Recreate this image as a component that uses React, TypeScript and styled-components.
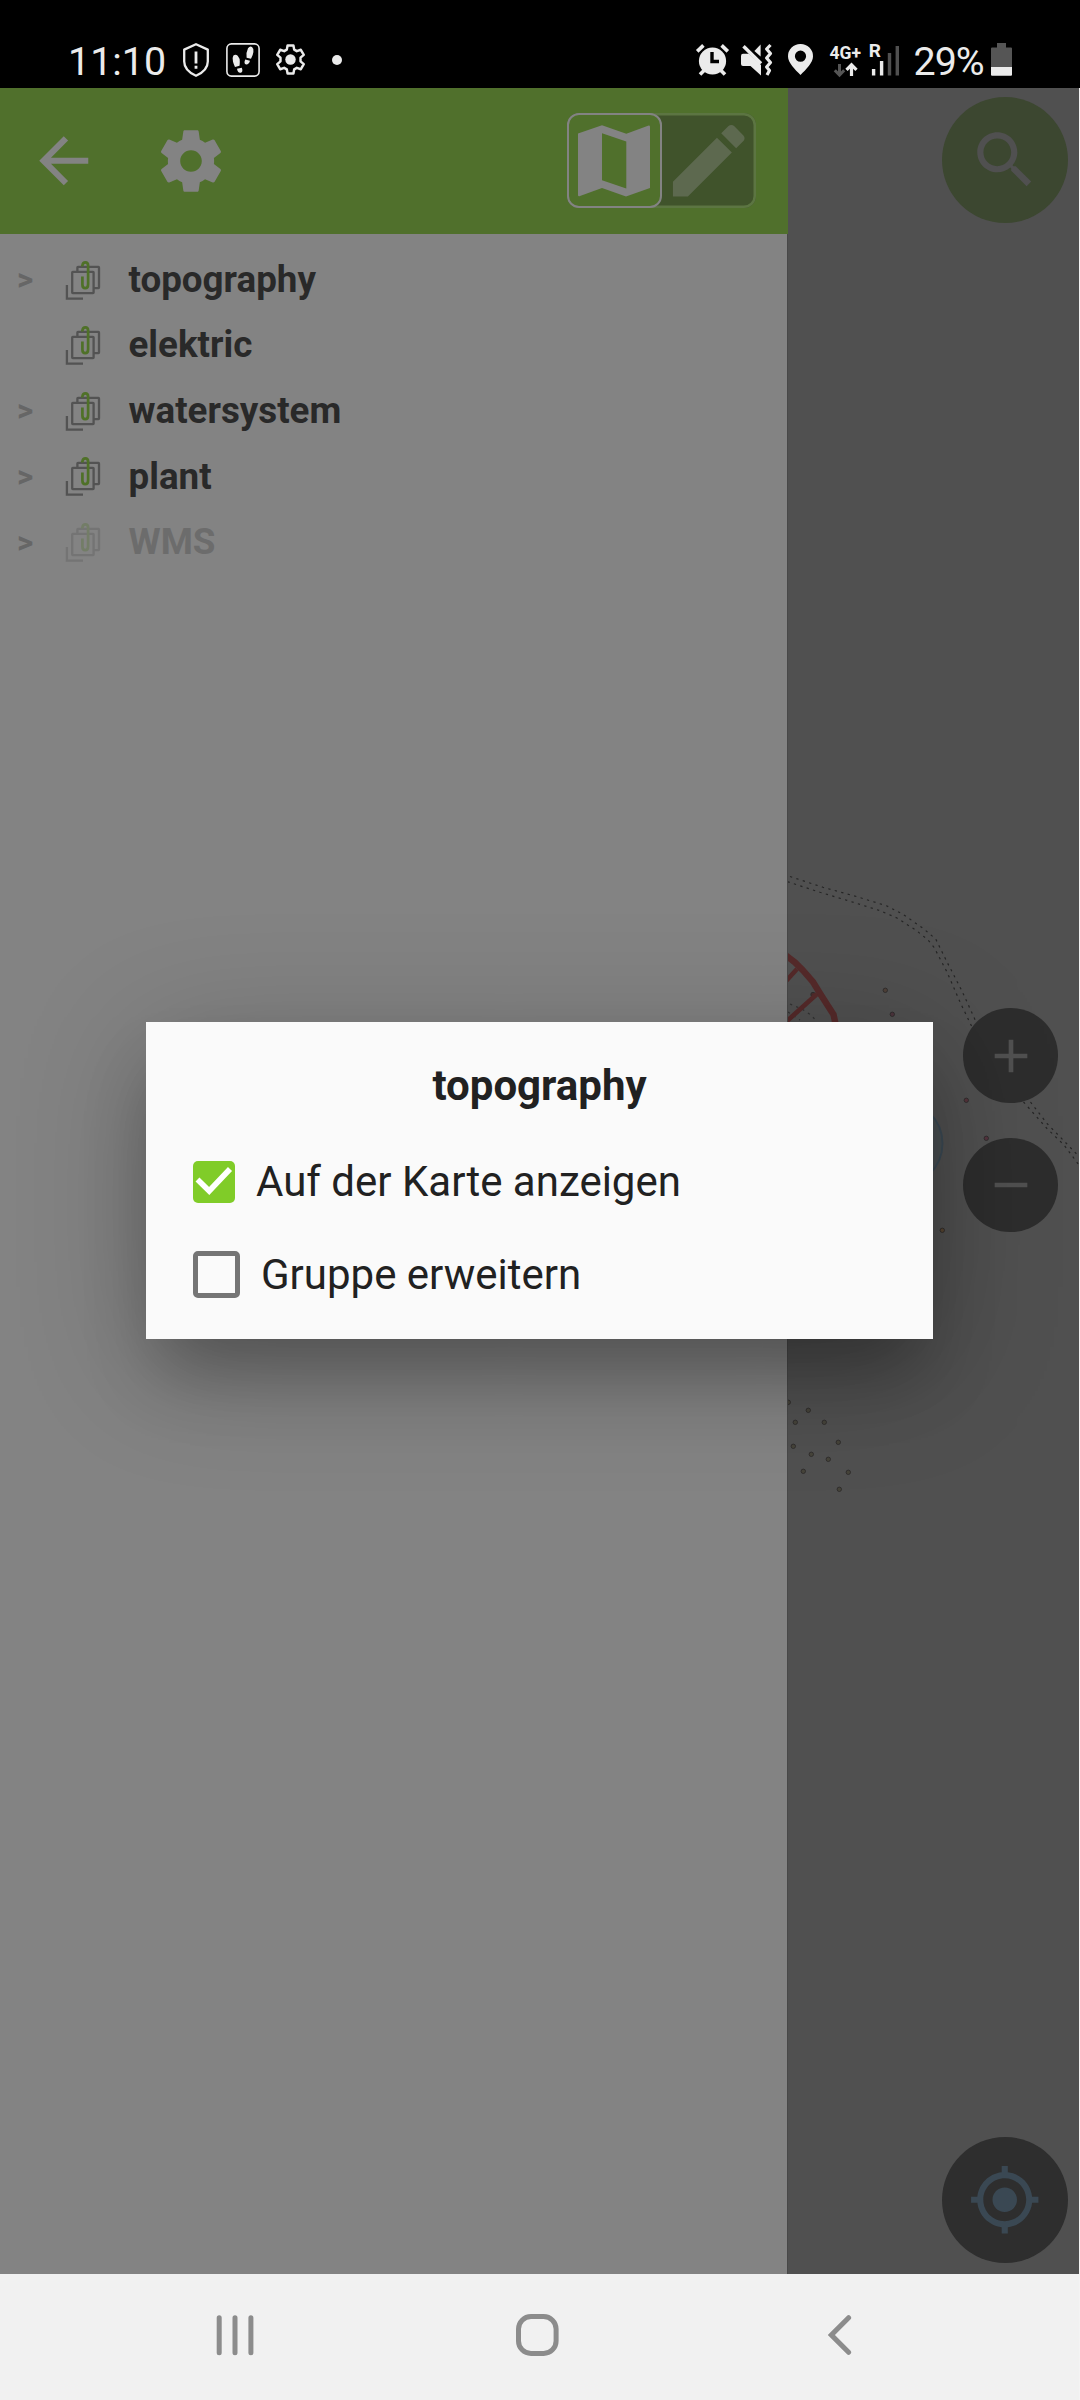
import React from "react";
import styled, { createGlobalStyle } from "styled-components";

const GlobalStyle = createGlobalStyle`
  *, *::before, *::after { box-sizing: border-box; }
  body { margin: 0; background: #f4f4f4; font-family: Roboto, "Noto Sans", sans-serif; }
  svg { display: block; flex: none; }
`;

const Screen = styled.div`
  width: 1080px;
  height: 2400px;
  display: flex;
  flex-direction: column;
  overflow: hidden;
`;

/* ---------- status bar ---------- */

const StatusBar = styled.header`
  height: 88px;
  flex: none;
  display: flex;
  justify-content: space-between;
  align-items: center;
  padding: 31px 68px 0 68px;
  background: #000;
  color: #ebebeb;
`;

const StatusGroup = styled.div`
  display: flex;
  align-items: center;
`;

const StatusText = styled.span<{ $width: number; $spacing?: number }>`
  width: ${(p) => p.$width}px;
  padding-top: 4px;
  font-size: 39.4px;
  line-height: 46px;
  letter-spacing: ${(p) => p.$spacing ?? 0}px;
  white-space: nowrap;
`;

const StatusIcon = styled.svg<{ $gap: number }>`
  margin-left: ${(p) => p.$gap}px;
  overflow: visible;
`;

/* ---------- main area ---------- */

const Main = styled.main`
  position: relative;
  width: 1079px;
  height: 2186px;
  flex: none;
  display: flex;
`;

const Drawer = styled.aside`
  width: 788px;
  flex: none;
  display: flex;
  flex-direction: column;
`;

const DrawerHeader = styled.div`
  height: 146px;
  flex: none;
  display: flex;
  align-items: center;
  padding: 0 32px 1px 26.5px;
  background: #50702c;
  color: #838383;
`;

const HeaderButton = styled.button<{ $gap?: number }>`
  border: 0;
  padding: 0;
  margin-left: ${(p) => p.$gap ?? 0}px;
  background: none;
  color: inherit;
`;

const ModeSwitch = styled.div`
  display: flex;
  width: 189px;
  height: 95px;
  margin-left: auto;
  border-radius: 12px;
  background: #40532b;
  box-shadow: inset 0 0 0 2.5px #5c7542;
`;

const ModeButton = styled.button<{ $active?: boolean }>`
  width: 94.5px;
  height: 95px;
  padding: 0;
  display: flex;
  align-items: center;
  justify-content: center;
  border: ${(p) => (p.$active ? "2.5px solid #838383" : "0")};
  border-radius: 12px;
  background: ${(p) => (p.$active ? "#50702c" : "transparent")};
  color: ${(p) => (p.$active ? "#838383" : "#5d694f")};
`;

const LayerList = styled.ul`
  flex: 1;
  margin: 0;
  padding: 12.3px 0 0;
  list-style: none;
  background: #838383;
  border-right: 1px solid #484848;
`;

const LayerRow = styled.li`
  height: 65.625px;
  display: flex;
  align-items: center;
`;

const Expander = styled.span`
  width: 66px;
  padding: 2px 0 0 17px;
  font-size: 31.5px;
  line-height: 36px;
  font-weight: 700;
  color: #666;
`;

const LayerIcon = styled.svg<{ $dim?: boolean }>`
  margin-top: 2px;
  overflow: visible;
  opacity: ${(p) => (p.$dim ? 0.3 : 1)};
`;

const LayerName = styled.span<{ $dim?: boolean }>`
  margin-left: 28.5px;
  padding-top: 1.4px;
  font-size: 36.75px;
  line-height: 44px;
  font-weight: 700;
  color: ${(p) => (p.$dim ? "#6c6c6c" : "#292929")};
`;

const MapPane = styled.section`
  position: relative;
  flex: 1;
  display: flex;
  flex-direction: column;
  align-items: flex-end;
  padding: 9.3px 10.8px 11px 0;
  background: #505050;
`;

const MapDrawing = styled.svg`
  position: absolute;
  inset: 0;
`;

const RoundButton = styled.button<{ $size: number; $bg: string; $fg: string }>`
  position: relative;
  width: ${(p) => p.$size}px;
  height: ${(p) => p.$size}px;
  flex: none;
  padding: 0;
  border: 0;
  border-radius: 50%;
  display: flex;
  align-items: center;
  justify-content: center;
  background: ${(p) => p.$bg};
  color: ${(p) => p.$fg};
`;

const ZoomGroup = styled.div`
  display: flex;
  flex-direction: column;
  gap: 34.8px;
  margin: 785.2px 10.3px auto 0;
`;

/* ---------- dialog ---------- */

const DialogLayer = styled.div`
  position: absolute;
  inset: 0;
  display: flex;
  align-items: center;
  justify-content: center;
  padding-bottom: 1px;
  overflow: hidden;
`;

const Dialog = styled.div`
  width: 787px;
  height: 317px;
  padding: 24px 47px 0;
  background: #fafafa;
  color: #212121;
  box-shadow: 0 22px 130px rgba(0, 0, 0, 0.22), 0 45px 65px -12px rgba(0, 0, 0, 0.25);
`;

const DialogTitle = styled.h2`
  margin: 0 0 9px;
  font-size: 42px;
  line-height: 80px;
  font-weight: 700;
  text-align: center;
`;

const Option = styled.label`
  height: 93px;
  display: flex;
  align-items: center;
  font-size: 42px;
  line-height: 50px;
`;

const CheckBox = styled.span<{ $checked?: boolean }>`
  width: ${(p) => (p.$checked ? 42 : 47)}px;
  height: ${(p) => (p.$checked ? 42 : 47)}px;
  margin-right: 21px;
  flex: none;
  border: ${(p) => (p.$checked ? "0" : "5px solid #757575")};
  border-radius: 5px;
  background: ${(p) => (p.$checked ? "#80cc28" : "transparent")};
`;

/* ---------- navigation bar ---------- */

const NavBar = styled.nav`
  flex: 1;
  width: 1079px;
  display: flex;
  align-items: center;
  padding: 0 0 4px 216px;
  background: #f1f1f1;
`;

const NavIcon = styled.svg<{ $gap?: number }>`
  margin-left: ${(p) => p.$gap ?? 0}px;
  fill: none;
  stroke: #8c8c8c;
  stroke-width: 5;
  stroke-linecap: round;
`;

/* ---------- icons ---------- */

const GEAR =
  "M19.43 12.98c.04-.32.07-.64.07-.98s-.03-.66-.07-.98l2.11-1.65c.19-.15.24-.42.12-.64l-2-3.46c-.12-.22-.39-.3-.61-.22l-2.49 1c-.52-.4-1.08-.73-1.69-.98l-.38-2.65C14.46 2.18 14.25 2 14 2h-4c-.25 0-.46.18-.49.42l-.38 2.65c-.61.25-1.17.59-1.69.98l-2.49-1c-.23-.09-.49 0-.61.22l-2 3.46c-.13.22-.07.49.12.64l2.11 1.65c-.04.32-.07.65-.07.98s.03.66.07.98l-2.11 1.65c-.19.15-.24.42-.12.64l2 3.46c.12.22.39.3.61.22l2.49-1c.52.4 1.08.73 1.69.98l.38 2.65c.03.24.24.42.49.42h4c.25 0 .46-.18.49-.42l.38-2.65c.61-.25 1.17-.59 1.69-.98l2.49 1c.23.09.49 0 .61-.22l2-3.46c.12-.22.07-.49-.12-.64l-2.11-1.65zM12 15.5c-1.93 0-3.5-1.57-3.5-3.5s1.57-3.5 3.5-3.5 3.5 1.57 3.5 3.5-1.57 3.5-3.5 3.5z";

const Glyph = ({ d, size }: { d: string; size: number }) => (
  <svg width={size} height={size} viewBox="0 0 24 24" fill="currentColor">
    <path d={d} />
  </svg>
);

const MapGlyph = () => (
  <svg width="72" height="72" viewBox="0 0 72 72" fill="currentColor">
    <path
      fillRule="evenodd"
      d="M0 8.5 24 0.3 48.3 8.7 70 .7 Q72 0 72 2V63L48 71.4 24 63 2 71Q0 71.7 0 70ZM24 8.2V55.3L48.3 63.5V16.5Z"
    />
  </svg>
);

const LayerGroupIcon = ({ dim }: { dim?: boolean }) => (
  <LayerIcon $dim={dim} width="34" height="39" viewBox="0 0 34 39" fill="none">
    <g stroke="#535353" strokeWidth="2.3">
      <rect x="11.4" y="5.8" width="21.6" height="21.4" rx="0.6" />
      <rect x="6.2" y="10.9" width="21.4" height="21.2" rx="0.6" fill="#838383" />
      <path d="M0.9 24V37.7H17" />
    </g>
    <path
      d="M16.4 5.6V4.4Q16.8 1.3 19.4 1.3 22.1 1.3 22.1 4.6V23.2Q22.1 27.2 19.2 27.2 16.4 27.2 16.4 23.6V15.6"
      stroke="#4f7128"
      strokeWidth="2.7"
    />
  </LayerIcon>
);

const MapDot = ({ x, y, fill }: { x: number; y: number; fill: string }) => (
  <circle cx={x} cy={y} r="2.2" fill={fill} stroke="#2e2b2b" strokeWidth="0.9" />
);

const layers = [
  { name: "topography", expandable: true },
  { name: "elektric", expandable: false },
  { name: "watersystem", expandable: true },
  { name: "plant", expandable: true },
  { name: "WMS", expandable: true, dim: true },
];

const treeDots = [
  [788.3, 1402.3], [808.3, 1410.3], [795.3, 1422.3], [824.3, 1422.3], [838.3, 1442.3], [793.3, 1446.3],
  [811.3, 1454.3], [828.3, 1459.3], [803.3, 1471.3], [848.3, 1472.3], [839.3, 1489.3],
];

export default function App() {
  return (
    <Screen>
      <GlobalStyle />
      <StatusBar>
        <StatusGroup>
          <StatusText $width={99}>11:10</StatusText>
          <StatusIcon $gap={16} width="26" height="34" viewBox="0 0 26 34" fill="none" stroke="#ebebeb">
            <path d="M13 1.2 24.8 6.6V18.5Q24.8 27.5 13 32.8 1.2 27.5 1.2 18.5V6.6Z" strokeWidth="2.3" strokeLinejoin="round" />
            <path d="M13 8.5V20.5M13 22.8V25.8" strokeWidth="2.8" />
          </StatusIcon>
          <StatusIcon $gap={17} width="34" height="34" viewBox="0 0 34 34" fill="#ebebeb">
            <rect x="0.9" y="0.9" width="32.2" height="32.2" rx="4.5" fill="none" stroke="#ebebeb" strokeWidth="1.6" />
            <path d="M7.4 12.6Q9.5 11 11.7 12.8 14 15.5 13.8 18.6 13.8 21 13.5 22.8L9 24Q7.7 21.5 7 18.8 6 14.8 7.4 12.6ZM11 25.8 15.8 24.8Q17.3 28.6 15 29.7 11.8 30.6 11 25.8Z" />
            <path d="M22 5.2Q24 2.6 26 4 28 5.6 27.4 9 27 12.3 25 15.8L20.6 14.8Q20 9 22 5.2ZM19.2 16.4 24 17.8Q22.8 21.8 20.2 21.6 17.4 20.8 19.2 16.4Z" />
          </StatusIcon>
          <StatusIcon $gap={11.5} width="37" height="37" viewBox="0 0 24 24" fill="none" stroke="#ebebeb">
            <path
              d="M10.1 2.9h3.8l.5 2.7 1.7 1 2.6-.9 1.9 3.3-2.1 1.8v2.4l2.1 1.8-1.9 3.3-2.6-.9-1.7 1-.5 2.7h-3.8l-.5-2.7-1.7-1-2.6.9-1.9-3.3 2.1-1.8v-2.4L3.4 9l1.9-3.3 2.6.9 1.7-1z"
              strokeWidth="1.6"
              strokeLinejoin="round"
            />
            <circle cx="12" cy="12" r="3.4" fill="#ebebeb" stroke="none" />
          </StatusIcon>
          <StatusIcon $gap={23} width="10" height="10" viewBox="0 0 10 10" fill="#ebebeb">
            <circle cx="5" cy="5" r="5" />
          </StatusIcon>
        </StatusGroup>
        <StatusGroup>
          <StatusIcon $gap={0} width="33" height="32" viewBox="0 0 33 32" fill="none" stroke="#ebebeb">
            <circle cx="16.5" cy="17" r="13.6" fill="#ebebeb" stroke="none" />
            <path d="M1.2 7.4 7.4 1.4M31.8 7.4 25.6 1.4" strokeWidth="3.6" />
            <path d="M4 30.5 9 25.5M29 30.5 24 25.5" strokeWidth="3.6" />
            <path d="M16 8V17.5H23" stroke="#000" strokeWidth="3.4" />
          </StatusIcon>
          <StatusIcon $gap={12.5} width="32" height="32" viewBox="0 0 32 32" fill="#ebebeb">
            <path d="M0 12Q0 9.8 2 9.8H8L20 21V31.4L9.5 22H2Q0 22 0 20Z" />
            <path d="M19.6 0.6V12.6L13.4 7Z" />
            <path d="M2.5 2.2 20 19.5" stroke="#ebebeb" strokeWidth="3.4" />
            <path d="M29.5 1 25.6 5 29.5 9.5 25.6 14 29.5 18.5 25.6 23 28.5 26.5 26 31" fill="none" stroke="#ebebeb" strokeWidth="3.2" strokeLinejoin="round" />
          </StatusIcon>
          <StatusIcon $gap={15} width="25" height="31" viewBox="0 0 25 31" fill="#ebebeb">
            <path fillRule="evenodd" d="M12.5 0A12.3 12.3 0 0 1 25 12.5C25 18.5 18 25.5 12.5 31 7 25.5 0 18.5 0 12.5A12.3 12.3 0 0 1 12.5 0ZM12.5 6.6A5.6 5.6 0 1 0 12.5 17.8 5.6 5.6 0 1 0 12.5 6.6Z" />
          </StatusIcon>
          <StatusIcon $gap={17} width="31" height="33" viewBox="0 0 31 33" fill="none">
            <text x="-0.5" y="15.5" fill="#ebebeb" fontFamily="Roboto" fontSize="17.6" fontWeight="700" textLength="31.5" lengthAdjust="spacingAndGlyphs">4G+</text>
            <path d="M9.5 21V32M4.8 27.2 9.5 32 14.2 27.2" stroke="#555" strokeWidth="3" />
            <path d="M21.5 33V22M16.5 26.8 21.5 21.8 26.5 26.8" stroke="#ebebeb" strokeWidth="3.2" />
          </StatusIcon>
          <StatusIcon $gap={9} width="29" height="33" viewBox="0 0 29 33">
            <text x="-1.2" y="14.4" fill="#ebebeb" fontFamily="Roboto" fontSize="19" fontWeight="700">R</text>
            <path d="M3.6 26V32.5M11.6 18V32.5" stroke="#ebebeb" strokeWidth="3.4" />
            <path d="M19.5 10V32.5M27.3 3V32.5" stroke="#505050" strokeWidth="3.4" />
          </StatusIcon>
          <StatusIcon $gap={0} width="14.5" height="1" />
          <StatusText $width={77.5} $spacing={-1}>29%</StatusText>
          <StatusIcon $gap={0} width="21" height="33" viewBox="0 0 21 33">
            <path d="M6 0H15V4.5H20Q21 4.5 21 5.5V24H0V5.5Q0 4.5 1 4.5H6Z" fill="#555" />
            <path d="M0 24H21V31.5Q21 32.7 20 32.7H1Q0 32.7 0 31.5Z" fill="#ebebeb" />
          </StatusIcon>
        </StatusGroup>
      </StatusBar>

      <Main>
        <Drawer>
          <DrawerHeader>
            <HeaderButton aria-label="Zurück">
              <Glyph size={73.5} d="M20 11H7.83l5.59-5.59L12 4l-8 8 8 8 1.41-1.41L7.83 13H20v-2z" />
            </HeaderButton>
            <HeaderButton $gap={54.4} aria-label="Einstellungen">
              <Glyph size={74} d={GEAR} />
            </HeaderButton>
            <ModeSwitch>
              <ModeButton $active aria-label="Karte">
                <MapGlyph />
              </ModeButton>
              <ModeButton aria-label="Bearbeiten">
                <Glyph
                  size={95.5}
                  d="M3 17.25V21h3.75L17.81 9.94l-3.75-3.75L3 17.25zM20.71 7.04c.39-.39.39-1.02 0-1.41l-2.34-2.34c-.39-.39-1.02-.39-1.41 0l-1.83 1.83 3.75 3.75 1.83-1.83z"
                />
              </ModeButton>
            </ModeSwitch>
          </DrawerHeader>
          <LayerList>
            {layers.map((layer) => (
              <LayerRow key={layer.name}>
                <Expander>{layer.expandable ? ">" : ""}</Expander>
                <LayerGroupIcon dim={layer.dim} />
                <LayerName $dim={layer.dim}>{layer.name}</LayerName>
              </LayerRow>
            ))}
          </LayerList>
        </Drawer>

        <MapPane>
          <MapDrawing width="291" height="2186" viewBox="788 88 291 2186" fill="none">
            <g stroke="#262626" strokeWidth="1.2" strokeDasharray="2.3 4.4">
              <path d="M790 876.5 823 887.3 857 896.7 887 906 903 914.3 923 928.3 935.7 939 947 962 962 991 977 1024" />
              <path d="M787.5 881.7 820 892.3 847 900.3 880 910.7 897 918 917 931 928 940 934 947.3 947 972 960 1002 972 1027" />
              <path d="M1030.5 1102 1047 1123.5 1066 1143 1079 1156.5" />
              <path d="M1023.5 1102 1047 1128.5 1064 1145 1079 1165" />
              <path d="M790 1004 802 1009 811 1015 818 1023" opacity="0.7" />
              <path d="M788 1012 800 1020" opacity="0.7" />
            </g>
            <MapDot x={813} y={994.5} fill="#4a2d2d" />
            <g stroke="#552a2a">
              <path d="M786 955.5 795 962.5 803 970.5 813 982 821 995 833.5 1014.5 836 1026" strokeWidth="6.4" />
              <path d="M786 981 797 969M786 1022 817 994" strokeWidth="4.6" />
            </g>
            <circle cx="900" cy="1143.5" r="42.5" fill="#494f52" stroke="#3b4a55" strokeWidth="1.8" />
            <MapDot x={885.3} y={990.3} fill="#4f4038" />
            <MapDot x={892.3} y={1014.3} fill="#4d353d" />
            <MapDot x={966.3} y={1100.3} fill="#55333b" />
            <MapDot x={986.3} y={1138.3} fill="#55333f" />
            <MapDot x={942.3} y={1230.3} fill="#584632" />
            {treeDots.map(([x, y]) => (
              <MapDot key={`${x}-${y}`} x={x} y={y} fill="#46443a" />
            ))}
          </MapDrawing>
          <RoundButton $size={126} $bg="#3c4730" $fg="#505050" aria-label="Suchen">
            <Glyph
              size={74}
              d="M15.5 14h-.79l-.28-.27C15.41 12.59 16 11.11 16 9.5 16 5.91 13.09 3 9.5 3S3 5.91 3 9.5 5.91 16 9.5 16c1.61 0 3.09-.59 4.23-1.57l.27.28v.79l5 4.99L20.49 19l-4.99-5zm-6 0C7.01 14 5 11.99 5 9.5S7.01 5 9.5 5 14 7.01 14 9.5 11.99 14 9.5 14z"
            />
          </RoundButton>
          <ZoomGroup>
            <RoundButton $size={94.5} $bg="#2d2d2d" $fg="#505050" aria-label="Vergrößern">
              <Glyph size={56} d="M19 13h-6v6h-2v-6H5v-2h6V5h2v6h6v2z" />
            </RoundButton>
            <RoundButton $size={94.5} $bg="#2d2d2d" $fg="#505050" aria-label="Verkleinern">
              <Glyph size={56} d="M19 13H5v-2h14v2z" />
            </RoundButton>
          </ZoomGroup>
          <RoundButton $size={126} $bg="#2e2e2e" $fg="#3a4853" aria-label="Standort">
            <Glyph
              size={73.5}
              d="M12 8c-2.21 0-4 1.79-4 4s1.79 4 4 4 4-1.79 4-4-1.79-4-4-4zm8.94 3c-.46-4.17-3.77-7.48-7.94-7.94V1h-2v2.06C6.83 3.52 3.52 6.83 3.06 11H1v2h2.06c.46 4.17 3.77 7.48 7.94 7.94V23h2v-2.06c4.17-.46 7.48-3.77 7.94-7.94H23v-2h-2.06zM12 19c-3.87 0-7-3.13-7-7s3.13-7 7-7 7 3.13 7 7-3.13 7-7 7z"
            />
          </RoundButton>
        </MapPane>

        <DialogLayer>
          <Dialog role="dialog">
            <DialogTitle>topography</DialogTitle>
            <Option>
              <CheckBox $checked>
                <svg width="42" height="42" viewBox="0 0 42 42" fill="none">
                  <path d="M4.5 18.6 16.2 30 37 8" stroke="#fff" strokeWidth="5.6" />
                </svg>
              </CheckBox>
              Auf der Karte anzeigen
            </Option>
            <Option>
              <CheckBox />
              Gruppe erweitern
            </Option>
          </Dialog>
        </DialogLayer>
      </Main>

      <NavBar>
        <NavIcon width="38" height="42" viewBox="0 0 38 42">
          <path d="M3.2 3.7V38.7M19 3.7V38.7M34.9 3.7V38.7" />
        </NavIcon>
        <NavIcon $gap={261.8} width="43" height="42" viewBox="0 0 43 42">
          <rect x="2.5" y="2.5" width="37.6" height="37" rx="12.5" />
        </NavIcon>
        <NavIcon $gap={269.3} width="24" height="42" viewBox="0 0 24 42">
          <path d="M20.6 3.7 3.4 21 20.6 38.3" />
        </NavIcon>
      </NavBar>
    </Screen>
  );
}
